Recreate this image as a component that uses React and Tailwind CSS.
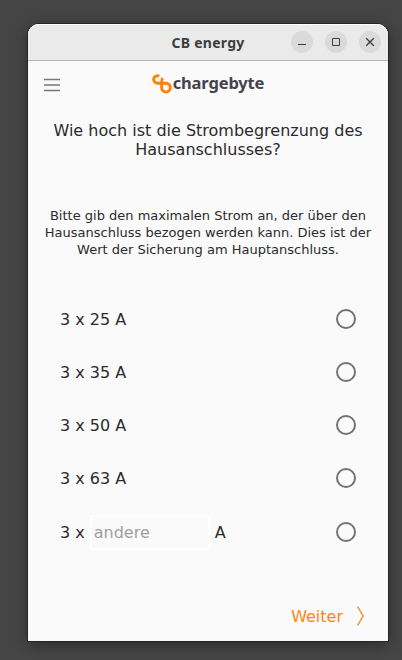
import React, { useState } from 'react';

const limits = ['3 x 25 A', '3 x 35 A', '3 x 50 A', '3 x 63 A'];

function WindowButton({ label, children }) {
  return (
    <button aria-label={label} className="flex size-[22px] items-center justify-center rounded-full bg-[#dadada]">
      <svg width="22" height="22" viewBox="0 0 22 22" fill="none" stroke="#3d3d3d">
        {children}
      </svg>
    </button>
  );
}

function TitleBar() {
  return (
    <header className="grid h-[37px] shrink-0 grid-cols-[1fr_auto_1fr] items-center rounded-t-[11px] border-t border-b border-t-white border-b-[#b5b5b5] bg-[#eaeaea]">
      <span />
      <h1 className="font-['Noto_Sans',sans-serif] text-[14px] leading-5 font-bold tracking-[0.25px] text-[#3d3d3d]">CB energy</h1>
      <div className="mb-px flex justify-end gap-3 pr-[7px]">
        <WindowButton label="Minimieren"><path d="M7 13.5h8" /></WindowButton>
        <WindowButton label="Maximieren"><path d="M7.5 7.5h7v7h-7z" /></WindowButton>
        <WindowButton label="Schließen"><path d="M7.2 7.2l7.6 7.6M14.8 7.2l-7.6 7.6" strokeWidth="1.3" /></WindowButton>
      </div>
    </header>
  );
}

function Logo() {
  return (
    <div className="mb-0.5 flex h-[22px] items-center gap-px">
      <svg width="20" height="22" viewBox="0 0 20 22" fill="none" stroke="#ff8300" strokeWidth="2.9" className="mt-0.5">
        <path d="M7.4 2.9C4.4 2.4 1.6 3.6 1.6 6.3c0 2.4 1.9 3.9 4.2 3.9h8.3c2.4 0 4.2 1.9 4.2 4.4s-1.9 4.5-4.3 4.5-4.4-2-4.4-4.5V9.5c0-2.2.3-3.2 1.1-4.3" />
      </svg>
      <span className="font-['Noto_Sans',sans-serif] text-[16.5px] leading-5 font-bold tracking-[-0.15px] text-[#43434d]">chargebyte</span>
    </div>
  );
}

function Radio({ label, checked, onChange }) {
  return (
    <input
      type="radio"
      name="limit"
      aria-label={label}
      checked={checked}
      onChange={onChange}
      className="size-5 appearance-none rounded-full border-2 border-[#737373] checked:border-[6px] checked:border-[#ff8300]"
    />
  );
}

export default function App() {
  const [selected, setSelected] = useState(null);
  return (
    <div className="h-[660px] w-[402px] overflow-hidden bg-[#454545] pt-6 pl-7 font-['DejaVu_Sans',sans-serif] text-[#2b2b2b]">
      <div className="flex h-[617px] w-[360px] flex-col rounded-t-[11px] bg-[#fafafa] shadow-[0_0_0_1px_rgba(0,0,0,0.35),0_3px_16px_rgba(0,0,0,0.4)]">
        <TitleBar />
        <main className="flex flex-1 flex-col">
          <div className="grid h-[46px] grid-cols-[1fr_auto_1fr] items-center px-4">
            <button aria-label="Menü" className="mt-0.5 w-4">
              <svg width="16" height="14" viewBox="0 0 16 14" fill="none" stroke="#77777c" strokeWidth="1.6">
                <path d="M0 1.5h16M0 7h16M0 12.5h16" />
              </svg>
            </button>
            <Logo />
          </div>
          <h2 className="mt-[14px] text-center text-base leading-[19px]">
            Wie hoch ist die Strombegrenzung des<br />Hausanschlusses?
          </h2>
          <p className="mt-12 text-center text-[13px] leading-[17px]">
            Bitte gib den maximalen Strom an, der über den<br />
            Hausanschluss bezogen werden kann. Dies ist der<br />
            Wert der Sicherung am Hauptanschluss.
          </p>
          <div className="mt-[34px] px-8">
            {limits.map((limit) => (
              <label key={limit} className="flex h-[53px] items-center justify-between text-base">
                <span className="pt-0.5">{limit}</span>
                <Radio label={limit} checked={selected === limit} onChange={() => setSelected(limit)} />
              </label>
            ))}
            <div className="flex h-14 items-center text-base">
              <span className="pt-0.5">3 x</span>
              <input
                placeholder="andere"
                className="mr-[5px] ml-[5px] h-[35px] w-[120px] rounded-[4px] border-2 border-white bg-transparent px-0.5 placeholder:text-[#a0a0a0]"
              />
              <span className="flex-1 pt-0.5">A</span>
              <Radio label="andere" checked={selected === 'andere'} onChange={() => setSelected('andere')} />
            </div>
          </div>
          <button className="mt-auto mr-6 mb-[14px] flex h-[22px] items-center gap-[14px] self-end text-base text-[#ff860d]">
            <span className="pt-0.5">Weiter</span>
            <svg width="7" height="20" viewBox="0 0 7 20" fill="none" stroke="#f28a20" strokeWidth="1.3">
              <path d="M0.6 0.7L6.2 10L0.6 19.3" />
            </svg>
          </button>
        </main>
      </div>
    </div>
  );
}
